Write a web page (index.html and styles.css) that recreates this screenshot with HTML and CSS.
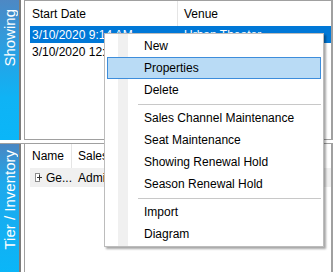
FILE: index.html
```html
<!DOCTYPE html>
<html>
<head>
<meta charset="utf-8">
<link rel="stylesheet" href="styles.css">
</head>
<body>
<div class="app">
  <section class="pane pane-top">
    <div class="tab tab-top"><span class="tab-label">Showing</span></div>
    <div class="grid">
      <div class="hdr">
        <div class="cell c1 sep">Start Date</div>
        <div class="cell c2">Venue</div>
      </div>
      <div class="row sel">
        <div class="cell c1">3/10/2020 9:14 AM</div>
        <div class="cell c2">Urban Theater</div>
      </div>
      <div class="row">
        <div class="cell c1">3/10/2020 12:30 PM</div>
        <div class="cell c2">Urban Theater</div>
      </div>
    </div>
  </section>
  <section class="pane pane-bottom">
    <div class="tab tab-bottom"><span class="tab-label">Tier / Inventory</span></div>
    <div class="grid grid-b">
      <div class="hdr hdr-b">
        <div class="cell n1 sep">Name</div>
        <div class="cell n2">Sales Channel</div>
      </div>
      <div class="row row-b">
        <div class="cell n1"><span class="plus"></span>Ge...</div>
        <div class="cell n2">Admission</div>
      </div>
    </div>
  </section>

  <div class="menu">
    <div class="gutter"></div>
    <div class="item">New</div>
    <div class="item hot">Properties</div>
    <div class="item">Delete</div>
    <div class="msep"></div>
    <div class="item">Sales Channel Maintenance</div>
    <div class="item">Seat Maintenance</div>
    <div class="item">Showing Renewal Hold</div>
    <div class="item">Season Renewal Hold</div>
    <div class="msep"></div>
    <div class="item">Import</div>
    <div class="item">Diagram</div>
  </div>
</div>
</body>
</html>
```

FILE: styles.css
```css
html, body {
  margin: 0;
  padding: 0;
  background: #ffffff;
}
body {
  font-family: "Liberation Sans", Arial, sans-serif;
  font-size: 12px;
  color: #000;
}
.app {
  position: relative;
  width: 333px;
  height: 272px;
  overflow: hidden;
  display: flex;
  flex-direction: column;
}
.pane {
  display: flex;
}
.pane-top {
  height: 140px;
}
.pane-bottom {
  margin-top: 3px;
  border-top: 1px solid #a0a0a0;
  height: 128px;
}
.tab {
  width: 19px;
  border-right: 2px solid #7c7c7c;
  display: flex;
  flex-direction: column;
  align-items: center;
  color: #fff;
}
.tab-top {
  background: linear-gradient(#4d88c4 0%, #2a9fe2 35%, #0fb3f5 70%, #0ab6f8 100%);
}
.tab-bottom {
  background: linear-gradient(#4a86c2 0%, #1ea8ec 30%, #0ab6f8 100%);
}
.tab-label {
  writing-mode: vertical-rl;
  transform: rotate(180deg);
  font-size: 15px;
  line-height: 19px;
  white-space: nowrap;
}
.tab-top .tab-label { margin-top: 9px; }
.tab-bottom .tab-label { margin-top: 6px; }

.grid {
  flex: 1;
  margin-left: 3px;
  border-left: 1px solid #a0a0a0;
  border-top: 1px solid #a0a0a0;
  border-bottom: 1px solid #a0a0a0;
  border-right: 2px solid #a0a0a0;
  display: flex;
  flex-direction: column;
  padding-left: 5px;
}
.grid-b {
  border-top: none;
  border-bottom: none;
}
.hdr, .row {
  display: flex;
  white-space: nowrap;
}
.hdr {
  height: 25px;
  align-items: center;
}
.row {
  height: 17px;
  align-items: center;
}
.cell {
  overflow: hidden;
  padding-left: 2px;
  box-sizing: border-box;
}
.c1 { width: 148px; height: 100%; display: flex; align-items: center; }
.c2 { flex: 1; padding-left: 6px; }
.sep { border-right: 1px solid #e5e5e5; }
.sel {
  background: #0078d7;
  color: #fff;
}
.hdr-b {
  height: 24px;
}
.n1 { width: 42px; height: 100%; display: flex; align-items: center; }
.n2 { flex: 1; padding-left: 6px; }
.row-b {
  height: 19px;
  background: #f0f0f0;
}
.plus {
  display: inline-block;
  width: 7px;
  height: 7px;
  border: 1px solid #8c8c8c;
  margin: 0 6px 0 3px;
  position: relative;
  background: #fff;
  box-sizing: content-box;
}
.plus::before, .plus::after {
  content: "";
  position: absolute;
  background: #333;
}
.plus::before { left: 1px; top: 3px; width: 5px; height: 1px; }
.plus::after { left: 3px; top: 1px; width: 1px; height: 5px; }

.menu {
  position: absolute;
  left: 104px;
  top: 33px;
  width: 218px;
  padding: 1px 0 0 0;
  height: 211px;
  background: #fff;
  border: 1px solid #bcbcbc;
  box-shadow: 2px 2px 2px rgba(0,0,0,0.35);
  display: flex;
  flex-direction: column;
}
.gutter {
  position: absolute;
  left: 13px;
  top: 0;
  bottom: 0;
  width: 10px;
  background: #f0f0f0;
}
.item {
  position: relative;
  height: 22px;
  line-height: 20px;
  padding-left: 36px;
  margin: 0 2px;
  border: 1px solid transparent;
  box-sizing: border-box;
  white-space: nowrap;
}
.item.hot {
  background: #b9dbf5;
  border-color: #3d8ddb;
}
.msep {
  position: relative;
  height: 1px;
  background: #c8c8c8;
  margin: 3px 2px 2px 33px;
}
```
